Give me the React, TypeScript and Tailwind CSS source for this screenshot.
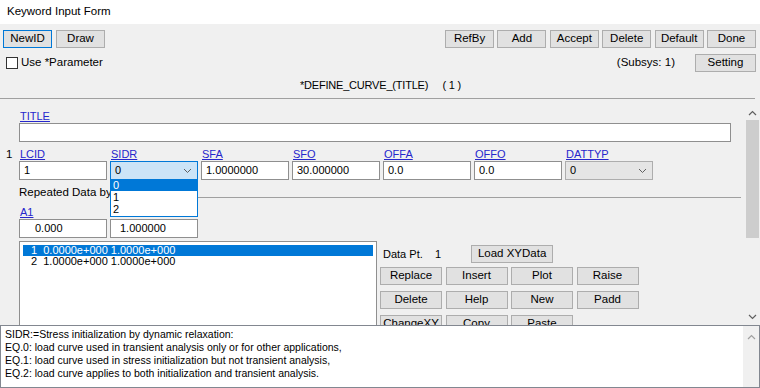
import React from "react";

const Btn = ({ label, className = "" }: { label: string; className?: string }) => (
    <div className={`flex items-center justify-center h-[18px] border border-[#adadad] bg-[#e1e1e1] text-[11.5px] leading-none ${className}`}>
        {label}
    </div>
);

const Link = ({ label, className = "" }: { label: string; className?: string }) => (
    <div className={`h-[12px] text-[11px] leading-[12px] text-[#2626cc] underline ${className}`}>{label}</div>
);

const Field = ({ value, className = "" }: { value: string; className?: string }) => (
    <div className={`flex items-center h-[19px] border border-[#8f8f8f] bg-white px-[4px] text-[11px] leading-none ${className}`}>
        {value}
    </div>
);

const Chevron = () => (
    <svg width="9" height="6" viewBox="0 0 9 6" className="ml-auto">
        <path d="M1 1 L4.5 4.5 L8 1" fill="none" stroke="#606060" strokeWidth="1" />
    </svg>
);

const fields = [
    { label: "LCID", value: "1" },
    { label: "SIDR", value: "0", select: "active" },
    { label: "SFA", value: "1.0000000" },
    { label: "SFO", value: "30.000000" },
    { label: "OFFA", value: "0.0" },
    { label: "OFFO", value: "0.0" },
    { label: "DATTYP", value: "0", select: "idle" },
];

const actionRows = [
    ["Replace", "Insert", "Plot", "Raise"],
    ["Delete", "Help", "New", "Padd"],
    ["ChangeXY", "Copy", "Paste"],
];

const help = [
    "SIDR:=Stress initialization by dynamic relaxation:",
    "EQ.0: load curve used in transient analysis only or for other applications,",
    "EQ.1: load curve used in stress initialization but not transient analysis,",
    "EQ.2: load curve applies to both initialization and transient analysis.",
];

const App = () => {
    return (
        <div className="w-[760px] h-[388px] overflow-hidden bg-[#f0f0f0] text-black flex flex-col" style={{ fontFamily: '"Liberation Sans", Arial, sans-serif' }}>
            {/* window title */}
            <div className="h-[24px] shrink-0 bg-white flex items-center px-[7px] text-[11.5px]">Keyword Input Form</div>

            {/* top toolbar */}
            <div className="flex justify-between pl-[3px] pr-[4px] pt-[6px]">
                <div className="flex gap-[4px]">
                    <Btn label="NewID" className="w-[49px] !border-[#0078d7]" />
                    <Btn label="Draw" className="w-[49px]" />
                </div>
                <div className="flex gap-[3.4px]">
                    {["RefBy", "Add", "Accept", "Delete", "Default", "Done"].map((b) => (
                        <Btn key={b} label={b} className="w-[49px]" />
                    ))}
                </div>
            </div>

            <div className="flex items-center h-[18px] mt-[6px] pl-[6px] pr-[4px]">
                <div className="w-[12px] h-[12px] border border-[#333] bg-white" />
                <span className="ml-[3px] text-[11.5px]">Use *Parameter</span>
                <span className="ml-auto text-[11.5px]">(Subsys: 1)</span>
                <Btn label="Setting" className="w-[61px] ml-[20px]" />
            </div>

            <div className="h-[27px] flex items-center justify-center text-[11px] pl-[6px] border-b border-[#a0a0a0] mr-[5px]">
                <span className="whitespace-pre tracking-[-0.2px]">*DEFINE_CURVE_(TITLE)     ( 1 )</span>
            </div>

            {/* scrollable form */}
            <div className="h-[226px] shrink-0 flex">
                <div className="flex-1 overflow-hidden pl-[19px] pt-[11px] relative">
                    <Link label="TITLE" className="ml-[1px]" />
                    <div className="mt-[1px] h-[19px] w-[712px] border border-[#8f8f8f] bg-white" />

                    <div className="mt-[6px] flex gap-[3px] relative">
                        <span className="absolute -left-[13px] top-0 text-[11.5px] leading-[12px]">1</span>
                        {fields.map((f) => (
                            <div key={f.label} className="w-[88px]">
                                <Link label={f.label} className="ml-[1px]" />
                                {f.select === "active" ? (
                                    <div className="mt-[1px] flex items-center h-[19px] border border-[#0078d7] bg-[#cce4f7] px-[4px] pr-[5px] text-[11px] leading-none">
                                        0<Chevron />
                                    </div>
                                ) : f.select === "idle" ? (
                                    <div className="mt-[1px] flex items-center h-[19px] border border-[#adadad] bg-[#e5e5e5] px-[4px] pr-[5px] text-[11px] leading-none">
                                        0<Chevron />
                                    </div>
                                ) : (
                                    <Field value={f.value} className="mt-[1px]" />
                                )}
                            </div>
                        ))}
                    </div>

                    <div className="mt-[6px] flex items-center h-[14px] pr-[3px]">
                        <span className="text-[11.5px] whitespace-nowrap">Repeated Data by Point</span>
                        <div className="flex-1 h-px bg-[#a0a0a0] ml-[4px] mt-[8px]" />
                    </div>

                    <Link label="A1" className="mt-[6px] ml-[1px]" />
                    <div className="mt-[1px] flex gap-[3px]">
                        <Field value="0.000" className="w-[88px] pl-[15px]" />
                        <Field value="1.000000" className="w-[88px] pl-[9px]" />
                    </div>

                    <div className="mt-[3px] flex">
                        <div className="w-[358px] h-[100px] border border-[#8f8f8f] bg-white p-[3px] text-[11px] leading-[11px]">
                            <div className="bg-[#0078d7] text-white whitespace-pre pl-[8px] h-[11px]">1  0.0000e+000 1.0000e+000</div>
                            <div className="whitespace-pre pl-[8px]">2  1.0000e+000 1.0000e+000</div>
                        </div>
                        <div className="ml-[3px] flex flex-col">
                            <div className="flex items-center h-[18px] mt-[4px]">
                                <span className="text-[11px] whitespace-pre ml-[3px]">Data Pt.    1</span>
                                <Btn label="Load XYData" className="w-[82px] ml-[30px]" />
                            </div>
                            {actionRows.map((row, i) => (
                                <div key={i} className={`flex gap-[3.5px] ${i === 0 ? "mt-[4px]" : "mt-[6px]"}`}>
                                    {row.map((b) => (
                                        <Btn key={b} label={b} className="w-[62px]" />
                                    ))}
                                </div>
                            ))}
                        </div>
                    </div>

                    {/* open SIDR dropdown */}
                    <div className="absolute left-[110px] top-[80px] w-[88px] h-[38px] border border-[#0078d7] bg-white text-[11px] leading-[12px]">
                        <div className="bg-[#0078d7] text-white pl-[2px] h-[11px] leading-[11px]">0</div>
                        <div className="pl-[2px]">1</div>
                        <div className="pl-[2px]">2</div>
                    </div>
                </div>

                {/* vertical scrollbar */}
                <div className="w-[16px] mt-[8px] flex flex-col items-center bg-[#f0f0f0]">
                    <svg width="9" height="6" viewBox="0 0 9 6" className="mt-[3px]">
                        <path d="M1 5 L4.5 1.5 L8 5" fill="none" stroke="#606060" strokeWidth="1.2" />
                    </svg>
                    <div className="mt-[4px] w-[13px] h-[118px] bg-[#cdcdcd]" />
                    <svg width="9" height="6" viewBox="0 0 9 6" className="mt-auto mb-[5px]">
                        <path d="M1 1 L4.5 4.5 L8 1" fill="none" stroke="#606060" strokeWidth="1.2" />
                    </svg>
                </div>
            </div>

            {/* help text */}
            <div className="flex-1 flex border border-[#828790] bg-white">
                <div className="flex-1 px-[4px] pt-[2px] text-[10.5px] leading-[13px]">
                    {help.map((l) => (
                        <div key={l}>{l}</div>
                    ))}
                </div>
                <div className="w-[16px] bg-[#f0f0f0] flex justify-center">
                    <svg width="9" height="6" viewBox="0 0 9 6" className="mt-[8px]">
                        <path d="M1 5 L4.5 1.5 L8 5" fill="none" stroke="#a0a0a0" strokeWidth="1.2" />
                    </svg>
                </div>
            </div>
        </div>
    );
};

export default App;
